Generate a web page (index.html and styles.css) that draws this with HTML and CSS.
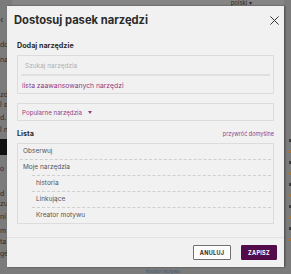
FILE: index.html
```html
<!DOCTYPE html>
<html lang="pl">
<head>
<meta charset="utf-8">
<link rel="stylesheet" href="styles.css">
</head>
<body>
<div class="page">
  <div class="left">
    <span class="frag f1">‹</span>
    <span class="frag f2">do</span>
    <span class="frag f3">na</span>
    <span class="frag f4">zd</span>
    <span class="frag f5">l s</span>
    <span class="frag f6">d.</span>
    <span class="frag f7">l n</span>
    <span class="block"></span>
    <span class="frag f8 purple">o</span>
    <span class="frag f9">d</span>
    <span class="frag f10">zu</span>
    <span class="frag f11">ni</span>
    <span class="frag f12">m</span>
    <span class="frag f13">ta</span>
    <span class="frag f14">gé</span>
  </div>
  <div class="center">
    <div class="top"><span class="lang">polski ▾</span></div>
    <div class="under-bottom"><span class="ulink">Kreator motywu</span></div>
  </div>
  <div class="right">
    <span class="mk dark"></span><span class="mk orange"></span>
    <span class="mk dark"></span><span class="mk orange"></span>
    <span class="mk dark"></span><span class="mk orange"></span>
    <span class="mk dark"></span><span class="mk orange"></span>
    <span class="mk dark"></span><span class="mk orange"></span>
  </div>
</div>

<div class="modal">
  <div class="head">
    <h1 class="title">Dostosuj pasek narzędzi</h1>
    <svg class="close" viewBox="0 0 10 10" width="9" height="9"><path d="M0.5 0.5 L9.5 9.5 M9.5 0.5 L0.5 9.5" stroke="#333" stroke-width="1.1" fill="none"/></svg>
  </div>
  <div class="body">
    <h2 class="h first">Dodaj narzędzie</h2>
    <div class="box search-box">
      <div class="search">Szukaj narzędzia</div>
      <a class="link adv">lista zaawansowanych narzędzi</a>
    </div>
    <div class="box dropdown">
      <span class="link">Popularne narzędzia</span>
      <span class="caret"></span>
    </div>
    <div class="list-head">
      <h2 class="h">Lista</h2>
      <a class="link small">przywróć domyślne</a>
    </div>
    <ul class="box list">
      <li class="item sep">Obserwuj</li>
      <li class="item">Moje narzędzia
        <ul class="sub">
          <li class="subitem">historia</li>
          <li class="subitem">Linkujące</li>
          <li class="subitem">Kreator motywu</li>
        </ul>
      </li>
    </ul>
  </div>
  <div class="foot">
    <button class="btn cancel">ANULUJ</button>
    <button class="btn save">ZAPISZ</button>
  </div>
</div>
</body>
</html>
```
FILE: styles.css
```css
* { box-sizing: border-box; margin: 0; padding: 0; }
html, body { width: 291px; height: 274px; overflow: hidden; }
body {
  background: #7b7b7b;
  font-family: "Inter", "Noto Sans", sans-serif;
  position: relative;
}
.page { display: flex; height: 274px; }
.left {
  width: 12px;
  display: flex;
  flex-direction: column;
  font-size: 7px;
  line-height: 8px;
  color: #2c2c2c;
}
.frag { display: block; white-space: nowrap; }
.f1 { margin-top: 16px; font-size: 9px; }
.f2 { margin-top: 17px; }
.f3 { margin-top: 7px; }
.f4 { margin-top: 27px; }
.f5 { margin-top: 2px; }
.f6 { margin-top: 5px; }
.f7 { margin-top: 4px; }
.block { display: block; width: 12px; height: 16px; background: #111; margin-top: 5px; }
.f8 { margin-top: 10px; }
.purple { color: #4b1a48; }
.f9 { margin-top: 17px; }
.f10 { margin-top: 2px; }
.f11 { margin-top: 5px; }
.f12 { margin-top: 6px; }
.f13 { margin-top: 3px; }
.f14 { margin-top: 4px; }
.center { flex: 1; display: flex; flex-direction: column; justify-content: space-between; }
.top { height: 7px; display: flex; justify-content: flex-end; padding-right: 32px; background: #858585; }
.lang { font-size: 6px; line-height: 6px; color: #2b2b2b; }
.under-bottom { height: 6px; padding-left: 134px; display: flex; align-items: flex-end; }
.ulink { font-size: 4.5px; line-height: 5px; color: #3f5a78; white-space: nowrap; }
.right {
  width: 7px;
  display: flex;
  flex-direction: column;
  align-items: flex-end;
  padding-top: 139px;
  gap: 8px;
}
.mk { display: block; width: 2px; height: 3px; }
.mk.dark { background: #3a3a3a; }
.mk.orange { background: #b2731f; }

.modal {
  position: absolute;
  left: 7px;
  top: 6px;
  width: 277px;
  height: 261px;
  background: #f1f1f1;
  box-shadow: 1px 0 2px rgba(0,0,0,.45);
  display: flex;
  flex-direction: column;
}
.head {
  height: 28px;
  display: flex;
  align-items: center;
  justify-content: space-between;
  padding: 0 5px 0 7px;
}
.title { font-size: 11.2px; font-weight: 700; color: #2b2b2b; letter-spacing: 0; }
.close { display: block; }
.body { flex: 1; padding: 0 10px; }
.h { font-size: 7.2px; font-weight: 700; color: #2b2b2b; line-height: 10px; }
.h.first { margin-top: 7px; }
.box { border: 1px solid #dcdcdc; }
.search-box { margin-top: 4px; padding: 2px 3px 2px; }
.search {
  height: 18px;
  border-bottom: 2px solid #e0e0e0;
  font-size: 6.5px;
  color: #b0b0b0;
  padding-left: 4px;
  display: flex;
  align-items: center;
}
.link { color: #8e3d89; font-size: 6.5px; text-decoration: none; }
.adv { display: block; line-height: 10px; margin-top: 5px; padding-left: 1px; font-size: 6.8px; }
.dropdown {
  margin-top: 9px;
  height: 18px;
  display: flex;
  align-items: center;
  padding-left: 4px;
  gap: 6px;
}
.dropdown .link { font-size: 6.2px; }
.caret {
  width: 0; height: 0;
  border-left: 2px solid transparent;
  border-right: 2px solid transparent;
  border-top: 3px solid #8e3d89;
}
.list-head {
  margin-top: 8px;
  display: flex;
  justify-content: space-between;
  align-items: center;
}
.small { font-size: 5.5px; }
.list { margin-top: 4px; list-style: none; padding: 0 2px; }
.item { font-size: 6.5px; color: #555; line-height: 15px; padding-left: 3px; }
.item.sep { border-bottom: 1px dashed #cfcfcf; }
.sub { list-style: none; margin-left: 9px; }
.subitem { border-top: 1px dashed #cfcfcf; padding-left: 4px; }
.foot {
  height: 30px;
  border-top: 1px solid #e2e2e2;
  display: flex;
  align-items: center;
  justify-content: flex-end;
  gap: 10px;
  padding-right: 7px;
}
.btn {
  height: 15px;
  font-family: inherit;
  font-size: 5.5px;
  font-weight: 700;
  letter-spacing: 0.3px;
  border-radius: 1px;
}
.cancel { width: 38px; background: #fbfbfb; border: 1px solid #6f6f6f; color: #2b2b2b; box-shadow: inset 0 0 0 1px #fff; }
.save { width: 36px; background: #520c4c; border: 1px solid #520c4c; color: #fff; }
```
